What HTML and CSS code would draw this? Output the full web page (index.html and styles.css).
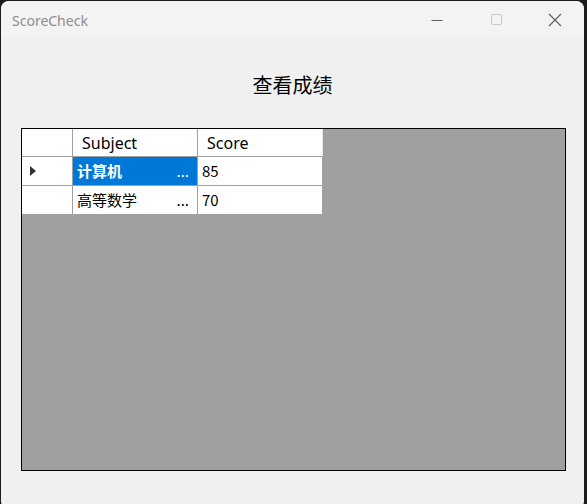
FILE: index.html
```html
<!DOCTYPE html>
<html>
<head>
<meta charset="utf-8">
<link rel="stylesheet" href="styles.css">
</head>
<body>
<div class="window">
  <div class="titlebar">
    <span class="title">ScoreCheck</span>
    <div class="controls">
      <span class="ctl"><svg width="12" height="12" viewBox="0 0 12 12"><path d="M0.5 6.5h11" stroke="#5c5c5c" stroke-width="1"/></svg></span>
      <span class="ctl"><svg width="12" height="12" viewBox="0 0 12 12"><rect x="1.5" y="0.5" width="10" height="10" rx="1.5" fill="none" stroke="#c8c8c8" stroke-width="1"/></svg></span>
      <span class="ctl"><svg width="14" height="14" viewBox="0 0 14 14"><path d="M1 1L13 13M13 1L1 13" stroke="#5c5c5c" stroke-width="1.1"/></svg></span>
    </div>
  </div>
  <div class="content">
    <h1 class="heading">查看成绩</h1>
    <div class="grid">
      <div class="table">
        <div class="row header">
          <div class="cell rh"></div>
          <div class="cell col">Subject</div>
          <div class="cell col">Score</div>
        </div>
        <div class="row">
          <div class="cell rh"><span class="arrow"></span></div>
          <div class="cell sel"><span>计算机</span><span class="dots">...</span></div>
          <div class="cell">85</div>
        </div>
        <div class="row">
          <div class="cell rh"></div>
          <div class="cell"><span>高等数学</span><span class="dots">...</span></div>
          <div class="cell">70</div>
        </div>
      </div>
    </div>
  </div>
</div>
</body>
</html>
```
FILE: styles.css
```css
html, body {
  margin: 0;
  padding: 0;
  background: #1c1c1c;
  width: 587px;
  height: 504px;
  overflow: hidden;
}
.window {
  margin: 1px 0 0 1px;
  width: 583px;
  height: 508px;
  background: #f0f0f0;
  border-radius: 8px;
  overflow: hidden;
  font-family: "Noto Sans CJK SC", "Noto Sans", sans-serif;
}
.titlebar {
  height: 37px;
  background: #f3f3f3;
  display: flex;
  align-items: center;
  justify-content: space-between;
}
.title {
  padding-left: 11px;
  font-size: 14px;
  color: #8e8e8e;
  font-family: "Noto Sans", "Open Sans", sans-serif;
  margin-top: 1px;
}
.controls {
  display: flex;
  height: 100%;
}
.ctl {
  width: 46px;
  display: flex;
  align-items: center;
  justify-content: center;
  margin-top: 1px;
}
.ctl:nth-child(1) { margin-right: 13px; }
.ctl:nth-child(2) { margin-right: 13px; }
.ctl:nth-child(3) { margin-right: 6px; }
.content {
  display: flex;
  flex-direction: column;
  align-items: flex-start;
}
.heading {
  align-self: center;
  margin: 33px 0 0 0;
  font-size: 20px;
  font-weight: normal;
  line-height: 28px;
  color: #000;
}
.grid {
  margin: 29px 0 0 20px;
  width: 543px;
  height: 341px;
  border: 1px solid #000;
  background: #a0a0a0;
}
.table {
  display: flex;
  flex-direction: column;
  width: 301px;
}
.row {
  display: flex;
  height: 29px;
}
.row.header { height: 28px; }
.cell {
  box-sizing: border-box;
  width: 125px;
  background: #fff;
  border-right: 1px solid #a0a0a0;
  border-bottom: 1px solid #a0a0a0;
  font-size: 15px;
  color: #000;
  display: flex;
  align-items: center;
  justify-content: space-between;
  padding: 0 8px 0 4px;
  line-height: 20px;
}
.cell.rh {
  width: 51px;
  padding: 0;
  justify-content: flex-start;
}
.header .cell.col {
  padding-left: 9px;
  font-family: "Noto Sans", "Open Sans", sans-serif;
  font-size: 16px;
}
.header .cell:last-child { border-right-color: #e4e4e4; }
.cell.sel {
  background: #0078d7;
  color: #fff;
  font-weight: bold;
}
.dots { font-weight: normal; }
.arrow {
  width: 0;
  height: 0;
  margin-left: 8px;
  border-top: 5px solid transparent;
  border-bottom: 5px solid transparent;
  border-left: 6px solid #333;
}
```
